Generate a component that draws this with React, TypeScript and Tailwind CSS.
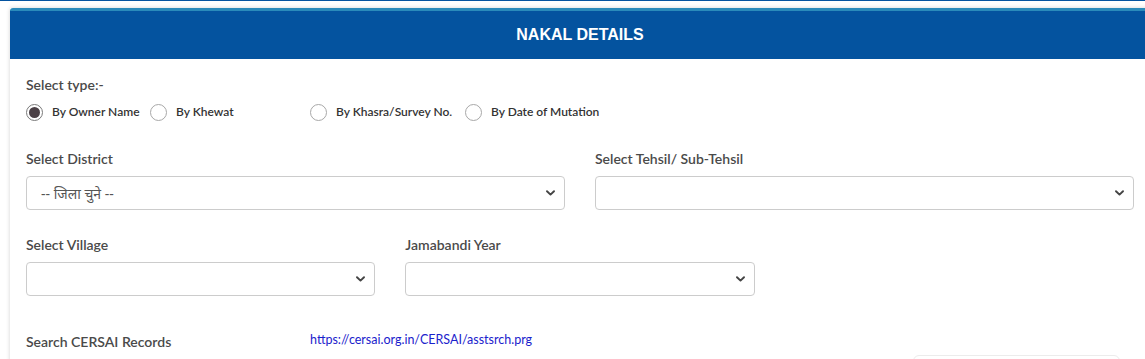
const Chevron = () => (
  <svg width="9" height="6" viewBox="0 0 9 6" className="shrink-0">
    <path d="M1 1.2 L4.5 4.6 L8 1.2" fill="none" stroke="#444" strokeWidth="1.9" strokeLinecap="round" strokeLinejoin="round" />
  </svg>
)

function Select({ value, className }: { value?: string; className: string }) {
  return (
    <div
      className={`h-[34px] flex items-center justify-between rounded-[4px] border border-[#cccccc] bg-white pl-[14px] pr-[9px] text-[14px] text-[#555] ${className}`}
    >
      <span>{value}</span>
      <Chevron />
    </div>
  )
}

function Radio({ label, checked, width }: { label: string; checked?: boolean; width: string }) {
  return (
    <label className={`flex items-center gap-[9px] ${width}`}>
      <span
        className={`flex h-[17px] w-[17px] shrink-0 items-center justify-center rounded-full border ${
          checked ? "border-[#7a7a7a]" : "border-[#a8a8a8]"
        } bg-white`}
      >
        {checked && <span className="h-[11px] w-[11px] rounded-full bg-[#4b4046]" />}
      </span>
      <span className="text-[12px] font-semibold text-[#333]">{label}</span>
    </label>
  )
}

export default function App() {
  return (
    <div className="h-[359px] w-[1145px] overflow-hidden bg-white font-['Lato','Liberation_Sans',sans-serif]">
      <div className="h-px bg-[#04539f]" />
      <div className="ml-[10px] mt-[7px] w-[1140px] shadow-[0_0_4px_rgba(0,0,0,0.18)]">
        {/* Header */}
        <div className="rounded-tl-[3px] border-t-[3px] border-[#2a8bbb] bg-[#04539f]">
          <h1 className="flex h-[48px] items-center justify-center font-['Liberation_Sans',Arial,sans-serif] text-[16px] font-bold text-white">
            NAKAL DETAILS
          </h1>
        </div>

        {/* Body */}
        <div className="px-[16px] pt-[16px] text-[#4a4a4a]">
          <p className="text-[14px] font-semibold leading-[20px]">Select type:-</p>
          <div className="mt-[7px] flex h-[20px] items-center">
            <Radio label="By Owner Name" checked width="w-[124px]" />
            <Radio label="By Khewat" width="w-[160px]" />
            <Radio label="By Khasra/Survey No." width="w-[155px]" />
            <Radio label="By Date of Mutation" width="w-[160px]" />
          </div>

          <div className="mt-[27px] grid grid-cols-2 gap-x-[30px]">
            <div>
              <p className="text-[14px] font-semibold leading-[20px]">Select District</p>
              <Select value="-- जिला चुने --" className="mt-[7px] font-['Noto_Sans','Lato',sans-serif] text-[13px] text-[#333]" />
            </div>
            <div>
              <p className="text-[14px] font-semibold leading-[20px]">Select Tehsil/ Sub-Tehsil</p>
              <Select className="mt-[7px]" />
            </div>
          </div>

          <div className="mt-[25px] grid grid-cols-3 gap-x-[30px]">
            <div>
              <p className="text-[14px] font-semibold leading-[20px]">Select Village</p>
              <Select className="mt-[7px]" />
            </div>
            <div>
              <p className="text-[14px] font-semibold leading-[20px]">Jamabandi Year</p>
              <Select className="mt-[7px]" />
            </div>
          </div>

          <div className="mt-[36px] grid grid-cols-[284px_1fr] items-center">
            <p className="text-[14px] font-semibold leading-[20px]">Search CERSAI Records</p>
            <a className="-mt-[4px] text-[12.5px] text-[#1a22cc]" href="#">
              https://cersai.org.in/CERSAI/asstsrch.prg
            </a>
          </div>
          <div className="ml-[887px] mt-[3px] h-[20px] w-[207px] rounded-[6px] border border-[#ececec]" />
        </div>
      </div>
    </div>
  )
}
